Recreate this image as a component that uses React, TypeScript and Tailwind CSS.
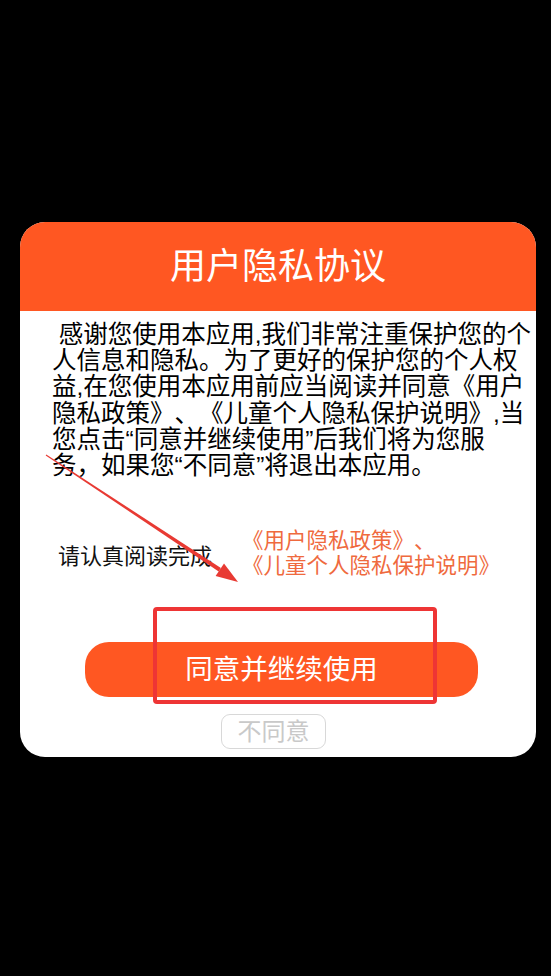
import React from "react";

export default function App() {
  const lines = [
    "\u00a0感谢您使用本应用,我们非常注重保护您的个",
    "人信息和隐私。为了更好的保护您的个人权",
    "益,在您使用本应用前应当阅读并同意《用户",
    "隐私政策》、《儿童个人隐私保护说明》,当",
    "您点击“同意并继续使用”后我们将为您服",
    "务，如果您“不同意”将退出本应用。",
  ];
  return (
    <div className="relative w-[551px] h-[976px] bg-black overflow-hidden font-['Liberation_Sans','Noto_Sans_CJK_SC',sans-serif] [text-spacing-trim:space-all]">
      <div className="pt-[222px] pl-[20px]">
        <div className="w-[516px] h-[535px] bg-white rounded-[25px] overflow-hidden flex flex-col">
          <div className="h-[89px] bg-[#FF5722] flex items-center justify-center">
            <span className="text-white text-[36px] leading-none">用户隐私协议</span>
          </div>
          <div className="pt-[11px] pl-[32px] text-black text-[24.5px] leading-[26.2px]">
            {lines.map((l, i) => (
              <div key={i} className="whitespace-nowrap">
                {l}
              </div>
            ))}
          </div>
          <div className="mt-[50px] flex items-center">
            <div className="ml-[38px] w-[184px] pt-[4px] text-[22px] leading-[25px] text-[#111] whitespace-nowrap">
              请认真阅读完成
            </div>
            <div className="text-[21.5px] leading-[25px] text-[#EF6A3E] whitespace-nowrap">
              <div>《用户隐私政策》、</div>
              <div>《儿童个人隐私保护说明》</div>
            </div>
          </div>
          <div className="mt-[63px] ml-[65px] w-[393px] h-[55px] rounded-[24px] bg-[#FF5722] flex items-center justify-center">
            <span className="text-white text-[27.5px] leading-none">同意并继续使用</span>
          </div>
          <div className="mt-[17px] ml-[201px] w-[105px] h-[35px] rounded-[9px] border-[1.5px] border-[#d8d8d8] flex items-center justify-center">
            <span className="text-[#c9c9c9] text-[24px] leading-none">不同意</span>
          </div>
        </div>
      </div>

      {/* annotation: red rectangle */}
      <div className="absolute left-[153px] top-[607px] w-[284px] h-[97px] border-4 border-[#EE3535] rounded-[4px] pointer-events-none" />

      {/* annotation: red arrow */}
      <svg
        className="absolute left-0 top-0 pointer-events-none"
        width="551"
        height="976"
        viewBox="0 0 551 976"
      >
        <polygon
          points="46.3,454.5 220.9,568.0 218.7,571.4 45.7,455.5"
          fill="#E83A33"
        />
        <polygon points="238,582 215.6,575.9 224.0,563.5" fill="#E83A33" />
      </svg>
    </div>
  );
}
